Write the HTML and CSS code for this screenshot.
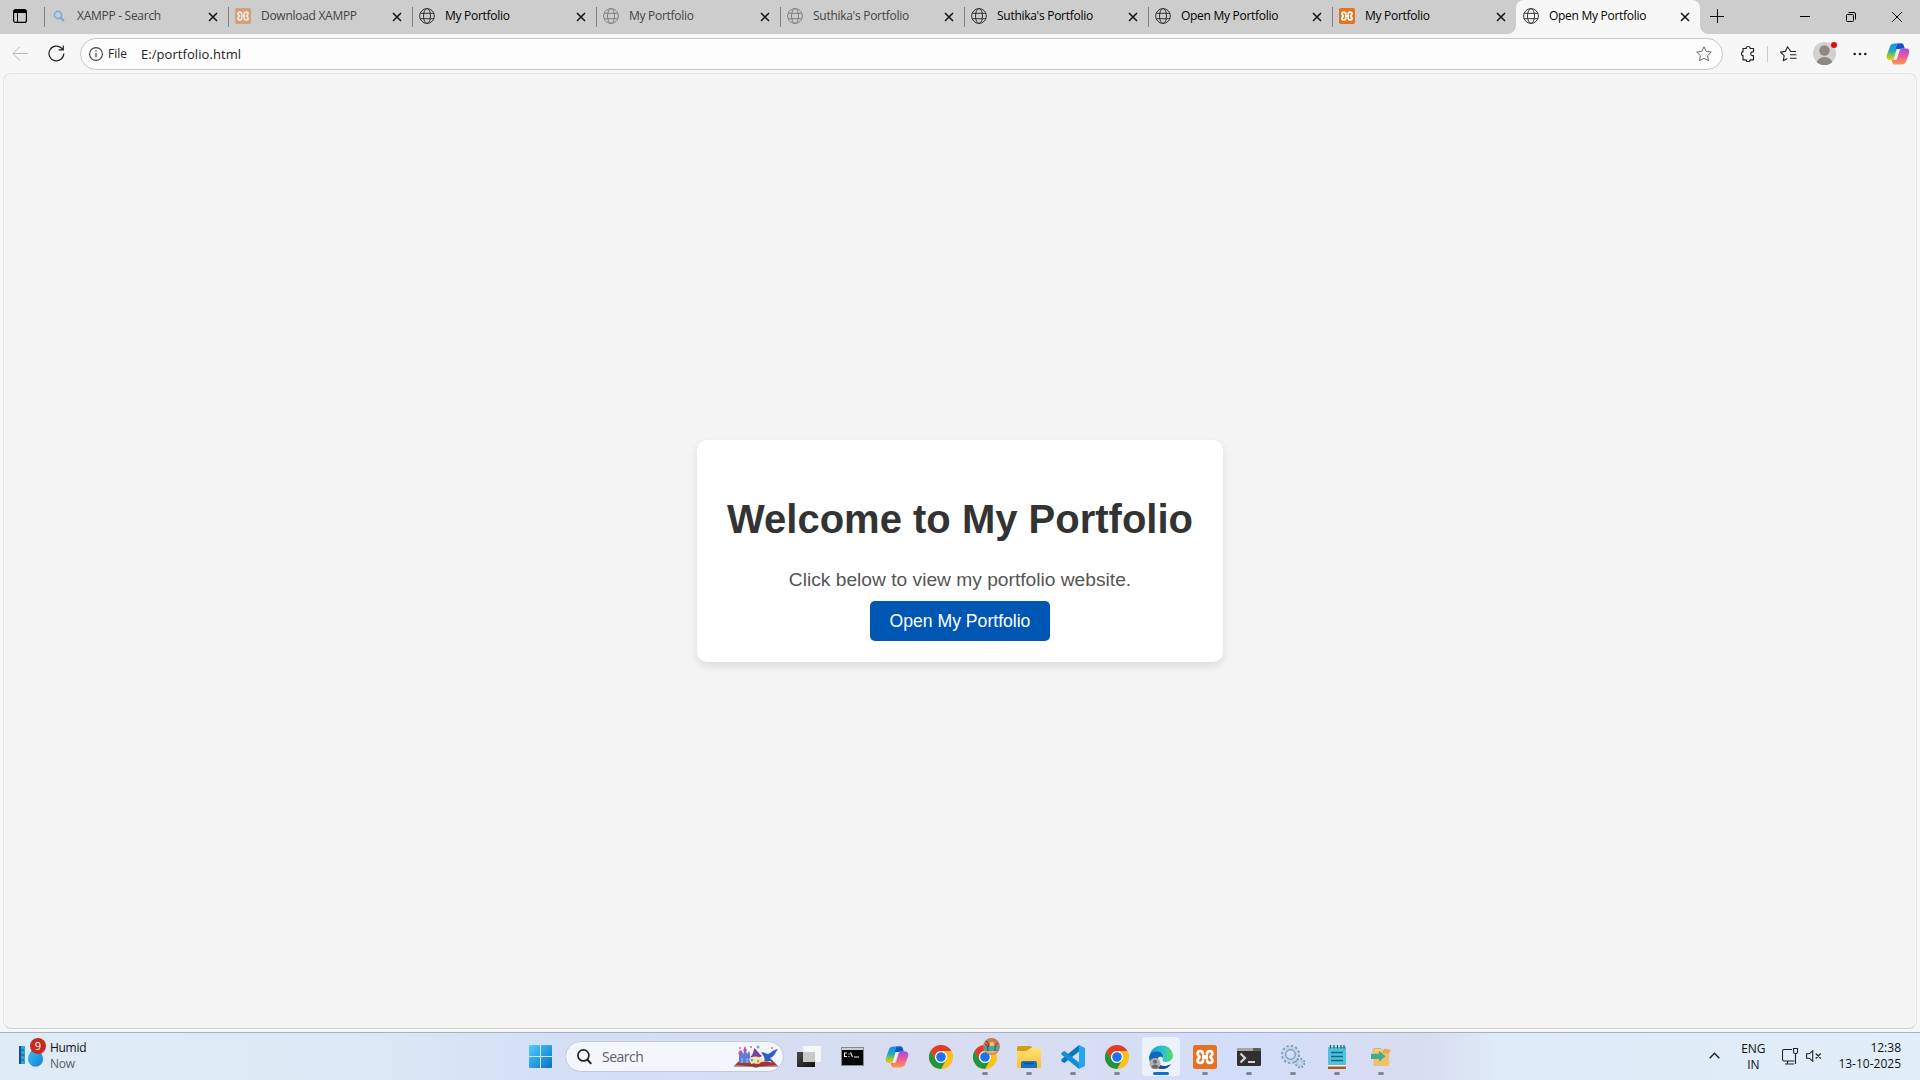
FILE: index.html
```html
<!DOCTYPE html>
<html lang="en">
<head>
<meta charset="utf-8">
<title>Open My Portfolio</title>
<link rel="stylesheet" href="styles.css">
</head>
<body>
<svg class="defs" width="0" height="0">
  <defs>
    <linearGradient id="win" x1="0" y1="0" x2="1" y2="1"><stop offset="0" stop-color="#4fd0fb"/><stop offset="1" stop-color="#0670cc"/></linearGradient>
    <linearGradient id="drop" x1="0" y1="0" x2="1" y2="1"><stop offset="0" stop-color="#3cc4f0"/><stop offset="1" stop-color="#1480dc"/></linearGradient>
    <linearGradient id="copA" x1="0" y1="0" x2="0" y2="1"><stop offset="0" stop-color="#1f8fea"/><stop offset=".45" stop-color="#22a7c0"/><stop offset=".7" stop-color="#8cc63e"/><stop offset="1" stop-color="#ffc61a"/></linearGradient>
    <linearGradient id="copB" x1="0" y1="0" x2="0" y2="1"><stop offset="0" stop-color="#a24be8"/><stop offset=".5" stop-color="#ee5a98"/><stop offset="1" stop-color="#ff9a4a"/></linearGradient>
    <linearGradient id="edgeA" x1="0" y1="0" x2="1" y2="0"><stop offset="0" stop-color="#1b9de2"/><stop offset=".6" stop-color="#2cc5c8"/><stop offset="1" stop-color="#5fdc5c"/></linearGradient>
    <linearGradient id="folder" x1="0" y1="0" x2="0" y2="1"><stop offset="0" stop-color="#ffe07a"/><stop offset="1" stop-color="#fbc02d"/></linearGradient>
    <linearGradient id="dark" x1="0" y1="0" x2="1" y2="1"><stop offset="0" stop-color="#4a4a4a"/><stop offset="1" stop-color="#111"/></linearGradient>
    <symbol id="globe" viewBox="0 0 16 16"><g fill="none" stroke="currentColor"><circle cx="8" cy="8" r="7.4"/><ellipse cx="8" cy="8" rx="3.5" ry="7.4"/><path d="M1.2 5.3h13.6M1.2 10.7h13.6"/></g></symbol>
    <symbol id="xampp" viewBox="0 0 24 24"><rect width="24" height="24" rx="2.500" fill="#e8701e"/><path d="M10 9.500V8.800C10 5.300 4.500 5.300 4.500 8.800c0 1.700 2 2.200 2 3.200s-2 1.500-2 3.200c0 3.500 5.500 3.500 5.500 0v-.7M14 9.500v-.7c0-3.500 5.500-3.500 5.500 0 0 1.700-2 2.200-2 3.200s2 1.500 2 3.200c0 3.500-5.500 3.500-5.500 0v-.7" fill="none" stroke="#fff" stroke-width="2.700"/><path d="M9 9.500h1.500l1.500.8 1.500-.8H15v5h-1.500l-1.500-.8-1.500.8H9z" fill="#fff"/></symbol>
    <symbol id="close" viewBox="0 0 10 10"><path d="M1 1l8 8M9 1L1 9" fill="none" stroke="currentColor" stroke-width="1.500"/></symbol>
    <symbol id="copilot" viewBox="0 0 24 24"><path d="M8.500 1.500h6.800c1.200 0 1.900.6 2.300 1.800l1 3.200h-3.100c-1.700 0-2.600.8-3.100 2.400l-2.200 7.200c-.5 1.400-1.300 2-2.800 2H4.200C1.200 18.100.1 16 .9 13L3.700 5.200C4.500 2.600 6 1.500 8.500 1.500z" fill="url(#copA)"/><path d="M11.500 1.500h3.800c1.200 0 1.900.6 2.300 1.800l1 3.200h-3.100c-1.700 0-2.600.8-3.100 2.400L9.800 6.500z" fill="#1753c8"/><path d="M15.500 22.500H8.700c-1.200 0-1.900-.6-2.300-1.800l-.9-2.600h3c1.500 0 2.300-.7 2.800-2.200l2.300-7.100c.5-1.500 1.300-2.300 2.900-2.300h3.300c3 0 4.100 2.100 3.300 5l-2.800 7.300c-.8 2.600-2.300 3.700-4.800 3.700z" fill="url(#copB)"/><path d="M10.600 7h4.300c-1.200.3-1.700 1.200-2.100 2.400l-2.400 7.200c-.2.600-.6 1.100-1.100 1.400H7.500z" fill="#eceffa"/></symbol>
    <symbol id="chrome" viewBox="0 0 24 24"><circle cx="12" cy="12" r="12" fill="#fbc116"/><path d="M1.600 6A12 12 0 0 1 22.400 6H12a6 6 0 0 0-5.200 9z" fill="#e33b2e"/><path d="M1.600 6A12 12 0 0 0 12 24l5.200-9A6 6 0 0 1 6.800 15z" fill="#229342"/><circle cx="12" cy="12" r="6" fill="#fff"/><circle cx="12" cy="12" r="4.800" fill="#1a73e8"/></symbol>
  </defs>
</svg>

<header class="tabstrip">
  <div class="workspaces"><svg width="14" height="14" viewBox="0 0 14 14"><rect x=".6" y=".6" width="12.800" height="12.800" rx="2" fill="none" stroke="#000" stroke-width="1.200"/><path d="M1 1h12v3H1z"/><path d="M4.500 4v9" stroke="#000"/></svg></div>
  <div class="tab asleep"><svg class="favicon" viewBox="0 0 16 16"><g fill="none" stroke="#2d8be0"><circle cx="7" cy="7" r="3.600" stroke-width="1.600"/><path d="M9.700 9.700L13 13" stroke-width="2"/></g></svg><span class="title">XAMPP - Search</span><svg class="close"><use href="#close"/></svg></div>
  <div class="tab asleep"><svg class="favicon"><use href="#xampp"/></svg><span class="title">Download XAMPP</span><svg class="close"><use href="#close"/></svg></div>
  <div class="tab"><svg class="favicon"><use href="#globe"/></svg><span class="title">My Portfolio</span><svg class="close"><use href="#close"/></svg></div>
  <div class="tab asleep"><svg class="favicon"><use href="#globe"/></svg><span class="title">My Portfolio</span><svg class="close"><use href="#close"/></svg></div>
  <div class="tab asleep"><svg class="favicon"><use href="#globe"/></svg><span class="title">Suthika's Portfolio</span><svg class="close"><use href="#close"/></svg></div>
  <div class="tab"><svg class="favicon"><use href="#globe"/></svg><span class="title">Suthika's Portfolio</span><svg class="close"><use href="#close"/></svg></div>
  <div class="tab"><svg class="favicon"><use href="#globe"/></svg><span class="title">Open My Portfolio</span><svg class="close"><use href="#close"/></svg></div>
  <div class="tab"><svg class="favicon"><use href="#xampp"/></svg><span class="title">My Portfolio</span><svg class="close"><use href="#close"/></svg></div>
  <div class="tab active"><svg class="favicon"><use href="#globe"/></svg><span class="title">Open My Portfolio</span><svg class="close"><use href="#close"/></svg></div>
  <svg class="newtab" width="14" height="14" viewBox="0 0 14 14"><path d="M0 7.500h14M7.500 0v14" stroke="#111"/></svg>
  <div class="window-buttons">
    <div><svg width="10" height="10" viewBox="0 0 10 10"><path d="M0 4.500h10" stroke="#000"/></svg></div>
    <div><svg width="10" height="10" viewBox="0 0 10 10" fill="none" stroke="#000"><rect x=".5" y="2.500" width="7" height="7" rx="1"/><path d="M2.500.5H8A1.500 1.500 0 0 1 9.500 2v5.500"/></svg></div>
    <div><svg width="10" height="10" viewBox="0 0 10 10"><path d="M0 0l10 10M10 0L0 10" stroke="#000"/></svg></div>
  </div>
</header>

<nav class="toolbar">
  <svg class="back" width="16" height="16" viewBox="0 0 16 16" fill="none" stroke="#b9b9b9"><path d="M16 7.500H1M8 .8L.8 7.500 8 14.500"/></svg>
  <svg class="reload" width="17" height="17" viewBox="0 0 17 17" fill="none" stroke="#222" stroke-width="1.200"><path d="M15.800 8.500A7.400 7.400 0 1 1 13.400 3l1.800 1.800M15.300.4v4.500h-4.600"/></svg>
  <div class="address">
    <svg width="14" height="14" viewBox="0 0 14 14"><circle cx="7" cy="7" r="6.400" fill="none" stroke="#444" stroke-width="1.100"/><path d="M7 6v4.300" stroke="#444" stroke-width="1.200"/><circle cx="7" cy="4" r=".8" fill="#444"/></svg>
    <span class="scheme">File</span>
    <span class="url">E:/portfolio.html</span>
    <svg class="star" width="16" height="16" viewBox="0 0 16 16"><path d="M8 .8l2.200 4.600 5.100.7-3.700 3.500.9 5.100L8 12.300l-4.500 2.400.9-5.100L.7 6.100l5.100-.7z" fill="none" stroke="#666" stroke-linejoin="round"/></svg>
  </div>
  <div class="actions">
    <svg class="ext" width="16" height="17" viewBox="0 0 16 17"><path d="M3 3.500h3.200a2 2 0 0 1 4 0h3.300v3.300h-.9a1.900 1.900 0 0 0 0 3.800h.9v4.200h-3.300a2 2 0 0 1-4 0H3v-4.200a2 2 0 0 1 0-3.900z" fill="none" stroke="#222" stroke-width="1.200" stroke-linejoin="round"/></svg>
    <i class="divider"></i>
    <svg class="favs" width="17" height="16" viewBox="0 0 17 16" fill="none" stroke="#222" stroke-width="1.100" stroke-linejoin="round"><path d="M16 5.500h-5.200L7.500.8 5.400 5.400l-4.900.7 3.700 3.500-.9 5.100 4-2.100M10 8.800h6.500M10 12.300h6.500"/></svg>
    <div class="profile"><svg width="23" height="23" viewBox="0 0 23 23"><defs><clipPath id="face"><circle cx="11.500" cy="11.500" r="11.500"/></clipPath></defs><g clip-path="url(#face)"><rect width="23" height="23" fill="#d3d1cf"/><g fill="#8c8886"><circle cx="11.500" cy="8.500" r="5.200"/><ellipse cx="11.500" cy="21.500" rx="8" ry="6.500"/></g></g></svg><i class="dot"></i></div>
    <svg class="more" width="14" height="4" viewBox="0 0 14 4" fill="#222"><circle cx="1.700" cy="2" r="1.300"/><circle cx="7" cy="2" r="1.300"/><circle cx="12.300" cy="2" r="1.300"/></svg>
    <svg class="cop" width="24" height="24"><use href="#copilot"/></svg>
  </div>
</nav>

<div class="viewport">
  <main class="page">
    <section class="card">
      <h1>Welcome to My Portfolio</h1>
      <p>Click below to view my portfolio website.</p>
      <a class="btn">Open My Portfolio</a>
    </section>
  </main>
</div>

<footer class="taskbar">
  <div class="weather">
    <div class="weather-icon">
      <svg width="28" height="34" viewBox="0 0 28 34"><path d="M0 13h6v18H0z" fill="#2aa5e0"/><path d="M0 13h2v18H0z" fill="#14508c"/><path d="M2 17h3M2 22h3M2 27h3" stroke="#14508c"/><path d="M16.500 12c3 4.500 7.500 8.500 7.500 14.300a7.500 7.500 0 0 1-15 0C9 20.500 13.500 16.500 16.500 12z" fill="url(#drop)"/></svg>
      <span class="badge">9</span>
    </div>
    <div class="two-lines"><span>Humid</span><span class="muted">Now</span></div>
  </div>

  <div class="apps">
    <svg class="start" width="23" height="23" viewBox="0 0 23 23" fill="url(#win)"><path d="M1 0h10v11H0V1a1 1 0 0 1 1-1zM12 0h10a1 1 0 0 1 1 1v10H12zM0 12h11v11H1a1 1 0 0 1-1-1zM12 12h11v10a1 1 0 0 1-1 1H12z"/></svg>
    <div class="search">
      <svg width="15" height="16" viewBox="0 0 15 16" fill="none" stroke="#222" stroke-width="1.700"><circle cx="6.400" cy="6.400" r="5.500"/><path d="M10.300 10.500l3.900 4.400" stroke-width="2"/></svg>
      <span>Search</span>
      <svg class="book" width="44" height="24" viewBox="0 0 44 24"><path d="M3 18l3-3 16 3 16-3 3 3 2 2-19 1.500h-4L1 20z" fill="#a8332f"/><path d="M0 20.500l20 0 2 1 2-1 20 0v1H25l-2 1h-2l-2-1H0z" fill="#7d2730"/><path d="M6 18c5-3 12-2 16 1 4-3 11-4 16-1l-2-3H8z" fill="#f1dcc2"/><path d="M5 18V8l2-3 2 3v2l2-8 2 7 2-3 1 3v9z" fill="#6a75d6"/><path d="M9 6l2-5 2 5zM4 9l2-4 2 4z" fill="#cf4aa4"/><path d="M7 13h2v5H7zM12 13h2v5h-2z" fill="#55b8ee"/><path d="M16 12c2-1 4-5 4-9 3 2 5 6 8 8-4 3-9 3-12 1z" fill="#7b3fa4"/><path d="M15 14c4-4 11-3 14 1l-4 4-4-1-4 1z" fill="#f5e9a6"/><circle cx="18" cy="15" r="1.300" fill="#52bd87"/><circle cx="24" cy="16" r="1.300" fill="#f07997"/><path d="M27 7c3 0 5 2 7 2s4-4 10-5c-3 4-4 8-8 9l3 3h-9c2-2-1-6-3-9z" fill="#2860c6"/><g fill="#f06a68"><circle cx="6" cy="3" r="1"/><circle cx="17" cy="2" r="1"/><circle cx="38" cy="3" r="1"/></g><circle cx="24" cy="2" r="1.500" fill="#66a9ee"/></svg>
    </div>
    <div class="app"><svg viewBox="0 0 24 24"><path d="M0 7h18v15H0z" fill="url(#dark)"/><path d="M6 1h18v16H6z" fill="#f6f6f6"/><path d="M6 7h12v10H6z" fill="#c9c9c9"/></svg></div>
    <div class="app"><svg viewBox="0 0 24 24"><rect x=".5" y="2.500" width="22" height="18" fill="#050505" stroke="#858b94"/><path d="M1 3h21v2H1z" fill="#c9ced6"/><path d="M6 8H3.500v3.500H6M8 8.500v1M8 11v1M9.500 7.500l2 4.500M13 12h5" fill="none" stroke="#eee" stroke-width="1.100"/></svg></div>
    <div class="app"><svg><use href="#copilot"/></svg></div>
    <div class="app"><svg><use href="#chrome"/></svg></div>
    <div class="app open"><svg><use href="#chrome"/></svg><svg class="avatar" viewBox="0 0 17 17"><circle cx="8.500" cy="8.500" r="8.500" fill="#c97852"/><path d="M.5 8h16a8.500 8.500 0 0 1-2 5H2.500A8.500 8.500 0 0 1 .5 8z" fill="#48a6a4"/><path d="M2.500 13h12a8 8 0 0 1-12 0z" fill="#d9b679"/><circle cx="9" cy="6" r="2.200" fill="#ffc277"/><path d="M5 13c0-4-1-6-3-7M5 9c1-3 0-5-2-6M12 13c0-4 0-6 3-8" stroke="#5b3933" fill="none"/></svg></div>
    <div class="app open"><svg viewBox="0 0 24 24"><path d="M0 3a2 2 0 0 1 2-2h11a2 2 0 0 1 2 2v4H0z" fill="#d99a0b"/><path d="M0 6h9l5-3h9a1 1 0 0 1 1 1v18a1 1 0 0 1-1 1H1a1 1 0 0 1-1-1z" fill="url(#folder)"/><path d="M4 23v-5a2 2 0 0 1 2-2h12a2 2 0 0 1 2 2v5z" fill="#1572c4"/><path d="M7 18.500h10" stroke="#0c4d91" stroke-width="1.500"/></svg></div>
    <div class="app open"><svg viewBox="0 0 24 24"><path d="M18 0l6 3v18l-6 3z" fill="#25a4f0"/><path d="M18 0v6.500L3.500 18 .5 16.500v-2.200z" fill="#0879bf"/><path d="M18 24v-6.500L3.500 6 .5 7.500v2.200z" fill="#148ed5"/></svg></div>
    <div class="app open"><svg><use href="#chrome"/></svg></div>
    <div class="app open current"><svg viewBox="0 0 24 24"><path d="M1 9C4-2 22-3 24 10c.3 5-3.500 7-7 7-2.500 0-4-1-3.500-2.500C16 12 14 8 10 8c-4 0-7 1-9 3z" fill="url(#edgeA)"/><path d="M.2 11C2 6.800 6 5.800 9.500 6.800c4 1 5.500 4 4.500 6.500-1-2-4-2-5.200 0C6 18 10 21 15 21c3 0 5-.6 7-2-2.500 4-8 6-13 4.500C2.500 22-.5 16 .2 11z" fill="#1267bd"/><path d="M9 13c-2 5 2 8 6 8 3 0 5-.6 7-2-2 3.500-6 5.500-10 5-4-1.500-6-6-3-11z" fill="#174e96"/><circle cx="6" cy="18.500" r="5.500" fill="#b4b2b0"/><circle cx="6" cy="16.700" r="2" fill="#6d6a68"/><path d="M2.500 22.500c0-4 7-4 7 0a6 6 0 0 1-7 0z" fill="#6d6a68"/></svg></div>
    <div class="app open"><svg><use href="#xampp"/></svg></div>
    <div class="app open"><svg viewBox="0 0 24 24"><rect y="3" width="24" height="18" rx="1.500" fill="#303030"/><path d="M1.500 3H16v3H0V4.500A1.500 1.500 0 0 1 1.500 3z" fill="#a6a6a6"/><path d="M16 3h6.500A1.500 1.500 0 0 1 24 4.500V6h-8z" fill="#606060"/><path d="M3.500 8.500L8 13l-4.500 4.500" stroke="#d5d5d5" stroke-width="2.200" fill="none"/><path d="M11 17h7" stroke="#fff" stroke-width="1.600"/></svg></div>
    <div class="app open"><svg viewBox="0 0 24 24" fill="none"><circle cx="9.500" cy="9.500" r="8" stroke="#7d99b3" stroke-width="3" stroke-dasharray="2.300 1.890"/><circle cx="9.500" cy="9.500" r="6.400" stroke="#bcd3e8" stroke-width="3"/><circle cx="9.500" cy="9.500" r="4.800" stroke="#5f86ad"/><circle cx="19" cy="18" r="4.200" stroke="#738fac" stroke-width="2" stroke-dasharray="1.700 1.600"/><circle cx="19" cy="18" r="2.800" stroke="#b2cade" stroke-width="2"/></svg></div>
    <div class="app open"><svg viewBox="0 0 24 24"><path d="M3 21h18v3H3z" fill="#b65316"/><path d="M3 2h18v19H3z" fill="#4fc3dc"/><path d="M3 20h18v1.500H3z" fill="#e9f4f7"/><path d="M5.500 0v3.500M9 0v3.500M12.500 0v3.500M16 0v3.500M19 0v3.500" stroke="#17506b" stroke-width="1.200"/><path d="M6 7.500h12M6 11.500h12M6 15.500h12" stroke="#126580" stroke-width="1.700"/></svg></div>
    <div class="app open"><svg viewBox="0 0 24 24"><path d="M4.500 7H20v14H4.500z" fill="#f3bf6c"/><path d="M5 3h7l1.500 3 2-2.500L22 5l-2 3.500h-5L13 7H3z" fill="#e3ac50"/><path d="M6 4h6l1.500 3H4.500z" fill="#f6cd88"/><path d="M2 8.700h8V5.800l6.500 5.500-6.500 5.500V14H2z" fill="#43ad87"/></svg></div>
  </div>

  <div class="tray">
    <svg class="chev" width="11" height="7" viewBox="0 0 11 7"><path d="M.7 6.200L5.500 1.300l4.800 4.900" fill="none" stroke="#222" stroke-width="1.500"/></svg>
    <div class="two-lines lang"><span>ENG</span><span>IN</span></div>
    <svg class="net" width="17" height="17" viewBox="0 0 17 17" fill="none" stroke="#222" stroke-width="1.100"><path d="M10 1.500H2A1.500 1.500 0 0 0 .5 3v8.500A1.500 1.500 0 0 0 2 13h10.500M5.500 13v3M3 16h9M11.500.5h4v3.500a1.500 1.500 0 0 1-1.500 1.500h-1A1.500 1.500 0 0 1 11.500 4zM13.500 5.500V16"/></svg>
    <svg class="vol" width="16" height="12" viewBox="0 0 16 12" fill="none" stroke="#222" stroke-width="1.100"><path d="M.6 3.800h2.600L6.700.8v10.400L3.200 8.200H.6zM9.700 3.500l5 5M14.700 3.500l-5 5"/></svg>
    <div class="two-lines clock"><span>12:38</span><span>13-10-2025</span></div>
  </div>
</footer>
</body>
</html>
```
FILE: styles.css
```css
* { box-sizing: border-box; }
body {
  margin: 0;
  width: 1920px;
  height: 1080px;
  overflow: hidden;
  display: flex;
  flex-direction: column;
  background: #f7f7f7;
  font-family: "Open Sans", "Noto Sans", sans-serif;
  font-size: 12px;
  color: #111;
}
svg { display: block; flex: none; }
.defs { position: absolute; }

/* Tab strip */
.tabstrip { display: flex; height: 34px; background: #cdcdcd; }
.workspaces { width: 44px; padding: 9px 0 0 13px; }
.tab {
  width: 184px;
  display: flex;
  align-items: center;
  padding: 0 10px 2px 7px;
  background: linear-gradient(#808080, #808080) 0 7px / 1px 20px no-repeat;
  color: #000;
}
.favicon { width: 16px; height: 16px; color: #333; }
.title { flex: 1; margin: 0 0 1px 10px; letter-spacing: -0.28px; white-space: nowrap; }
.close { width: 10px; height: 10px; margin-top: 2px; color: #111; }
.asleep .favicon { opacity: .5; }
.asleep .title { color: #444; }
.tab.active { position: relative; background: #f7f7f7; border-radius: 8px 8px 0 0; }
.tab.active::before, .tab.active::after {
  content: "";
  position: absolute;
  bottom: 0;
  width: 8px;
  height: 8px;
}
.tab.active::before { left: -8px; background: radial-gradient(circle at 0 0, #cdcdcd 7.5px, #f7f7f7 8px); }
.tab.active::after { right: -8px; background: radial-gradient(circle at 100% 0, #cdcdcd 7.5px, #f7f7f7 8px); }
.newtab { margin: 9px 0 0 10px; }
.window-buttons { display: flex; margin-left: auto; }
.window-buttons div { width: 46px; display: grid; place-items: center; }

/* Toolbar */
.toolbar { display: flex; align-items: center; height: 39px; padding: 0 10px 0 12px; }
.reload { margin-left: 20px; }
.address {
  display: flex;
  align-items: center;
  width: 1643px;
  height: 32px;
  margin-left: 15px;
  padding: 0 10px 0 8px;
  background: #fdfdfd;
  border: 1px solid #c8c8c8;
  border-radius: 16px;
}
.scheme { margin-left: 5px; color: #222; }
.url { flex: 1; margin-left: 14px; font-size: 13px; letter-spacing: 0.06px; color: #222; }
.actions { display: flex; align-items: center; flex: 1; }
.ext { margin-left: 17px; }
.divider { width: 1px; height: 16px; margin-left: 11px; background: #ccc; }
.favs { margin-left: 12px; }
.profile { position: relative; margin-left: 16px; }
.dot { position: absolute; top: 0; right: -1px; width: 6px; height: 6px; border-radius: 50%; background: #e00b0b; }
.more { margin-left: 17px; }
.cop { margin-left: auto; }

/* Web page */
.viewport { flex: 1; padding: 0 3px 3px; }
.page {
  height: 100%;
  display: flex;
  align-items: center;
  justify-content: center;
  background: #f4f4f4;
  border: 1px solid #e4e4e4;
  border-bottom-color: #d0d0d0;
  border-radius: 8px;
  font-family: "Liberation Sans", Arial, sans-serif;
  font-size: 16px;
}
.card {
  padding: 30px;
  background: #fff;
  border-radius: 10px;
  box-shadow: 0 4px 8px rgba(0, 0, 0, .1);
  text-align: center;
}
.card h1 { margin: 26.8px 0; font-size: 40px; color: #333; }
.card p { margin: 0 0 20.2px; font-size: 19.2px; color: #555; }
.btn { padding: 10px 20px; background: #0056b3; border-radius: 5px; color: #fff; font-size: 17.6px; }

/* Taskbar */
.taskbar {
  display: grid;
  grid-template-columns: 529px 874px 1fr;
  height: 48px;
  border-top: 1px solid #a9b3c0;
  background: linear-gradient(90deg, #dfebf5 0, #dce8f5 20%, #d4e0f5 28%, #d8dcf0 48%, #d8def2 56%, #d2defa 64%, #d8dcef 74%, #deebf8 78%, #e1edf8 100%);
}
.weather { display: flex; padding-left: 19px; }
.weather-icon { position: relative; width: 28px; }
.badge {
  position: absolute;
  left: 11px;
  top: 5px;
  width: 16px;
  height: 16px;
  border-radius: 50%;
  background: #c42b1c;
  color: #fff;
  font-size: 11px;
  line-height: 16px;
  text-align: center;
}
.two-lines { display: flex; flex-direction: column; padding-top: 7px; line-height: 16px; white-space: nowrap; }
.weather .two-lines { margin-left: 3px; letter-spacing: -0.3px; }
.muted { color: #5a6068; }
.apps { display: flex; align-items: center; }
.search {
  display: flex;
  align-items: center;
  width: 219px;
  height: 31px;
  margin: 0 3px 0 13px;
  padding: 0 5px 0 11px;
  border: 1px solid #c0c9dd;
  border-radius: 16px;
  background: #f3f6fc;
  color: #5c5f66;
  font-size: 14px;
}
.search span { flex: 1; margin: 0 0 1px 10px; letter-spacing: -0.5px; }
.app { position: relative; width: 44px; height: 47px; display: grid; place-items: center; }
.app > svg { width: 24px; height: 24px; }
.app > .avatar { position: absolute; left: 20px; top: 5px; width: 17px; height: 17px; }
.open::after {
  content: "";
  position: absolute;
  left: 19px;
  bottom: 5px;
  width: 6px;
  height: 3px;
  border-radius: 2px;
  background: #82868f;
}
.current::before {
  content: "";
  position: absolute;
  inset: 4px 3px 4px 3px;
  border-radius: 4px;
  background: #edf1fb;
}
.current > svg { position: relative; }
.current::after { left: 14px; width: 16px; background: #0a74cf; }
.tray { display: flex; justify-content: flex-end; padding-right: 19px; }
.chev { margin: 19px 21px 0 0; }
.lang { width: 24px; padding-top: 8px; align-items: center; margin-right: 17px; }
.net { margin: 15px 7px 0 0; }
.vol { margin: 17px 16px 0 0; }
.clock { align-items: flex-end; }
```
